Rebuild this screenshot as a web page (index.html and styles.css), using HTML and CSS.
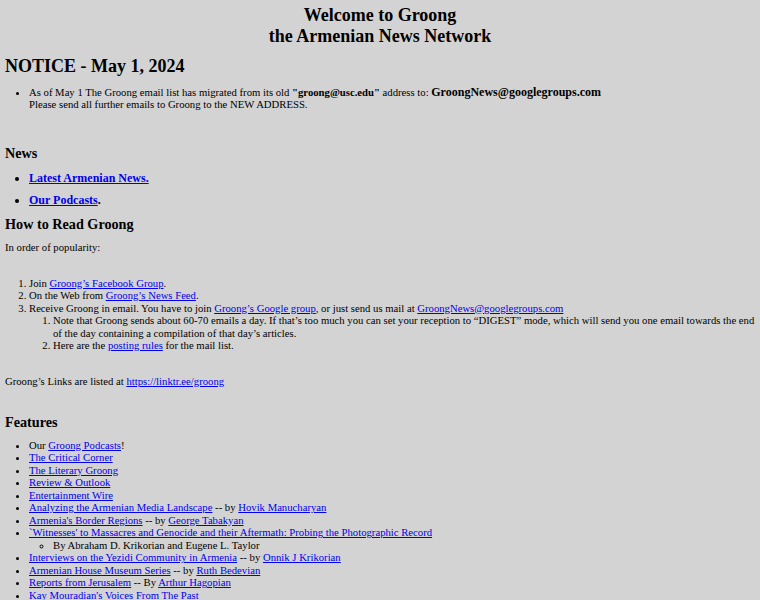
FILE: index.html
```html
<!DOCTYPE html>
<html>
<head>
<meta charset="utf-8">
<title>Groong</title>
<link rel="stylesheet" href="styles.css">
</head>
<body>
<h1 class="title">Welcome to Groong<br>the Armenian News Network</h1>
<h1 class="notice">NOTICE - May 1, 2024</h1>
<ul class="notice-list">
<li>As of May 1 The Groong email list has migrated from its old <b>"groong@usc.edu"</b> address to: <b class="big">GroongNews@googlegroups.com</b><br>Please send all further emails to Groong to the NEW ADDRESS.</li>
</ul>
<h2 class="sec news-h">News</h2>
<ul class="news-list">
<li><a href="#">Latest Armenian News.</a></li>
<li><a href="#">Our Podcasts</a>.</li>
</ul>
<h2 class="sec how-h">How to Read Groong</h2>
<p class="order">In order of popularity:</p>
<ol class="read-list">
<li>Join <a href="#">Groong’s Facebook Group</a>.</li>
<li>On the Web from <a href="#">Groong’s News Feed</a>.</li>
<li>Receive Groong in email. You have to join <a href="#">Groong’s Google group</a>, or just send us mail at <a href="#">GroongNews@googlegroups.com</a>
<ol>
<li>Note that Groong sends about 60-70 emails a day. If that’s too much you can set your reception to “DIGEST” mode, which will send you one email towards the end of the day containing a compilation of that day’s articles.</li>
<li>Here are the <a href="#">posting rules</a> for the mail list.</li>
</ol>
</li>
</ol>
<p class="links">Groong’s Links are listed at <a href="#">https://linktr.ee/groong</a></p>
<h2 class="sec feat-h">Features</h2>
<ul class="feat-list">
<li>Our <a href="#">Groong Podcasts</a>!</li>
<li><a href="#">The Critical Corner</a></li>
<li><a href="#">The Literary Groong</a></li>
<li><a href="#">Review &amp; Outlook</a></li>
<li><a href="#">Entertainment Wire</a></li>
<li><a href="#">Analyzing the Armenian Media Landscape</a> -- by <a href="#">Hovik Manucharyan</a></li>
<li><a href="#">Armenia's Border Regions</a> -- by <a href="#">George Tabakyan</a></li>
<li><a href="#">`Witnesses' to Massacres and Genocide and their Aftermath: Probing the Photographic Record</a>
<ul><li>By Abraham D. Krikorian and Eugene L. Taylor</li></ul>
</li>
<li><a href="#">Interviews on the Yezidi Community in Armenia</a> -- by <a href="#">Onnik J Krikorian</a></li>
<li><a href="#">Armenian House Museum Series</a> -- by <a href="#">Ruth Bedevian</a></li>
<li><a href="#">Reports from Jerusalem</a> -- By <a href="#">Arthur Hagopian</a></li>
<li><a href="#">Kay Mouradian's Voices From The Past</a></li>
</ul>
</body>
</html>
```
FILE: styles.css
```css
html { background: #d3d3d3; }
body {
  margin: 0 5px;
  padding-top: 5px;
  background: #d3d3d3;
  color: #000;
  font-family: "Liberation Serif", "Times New Roman", serif;
  font-size: 10.7px;
  line-height: 12.5px;
}
a { color: #0000ee; }
h1, h2, p, ul, ol { margin: 0; }
.title {
  font-size: 18px;
  line-height: 20.5px;
  text-align: center;
}
.notice {
  font-size: 18px;
  line-height: 21px;
  margin-top: 10px;
}
ul, ol { padding-left: 24px; }
.notice-list { margin-top: 8.5px; }
.big { font-size: 12px; }
.sec {
  font-size: 14.2px;
  line-height: 16.5px;
}
.news-h { margin-top: 34px; }
.news-list { margin-top: 9px; }
.news-list li {
  font-size: 12px;
  line-height: 16.5px;
  font-weight: bold;
  margin-bottom: 5.5px;
}
.news-list li:last-child { margin-bottom: 0; }
.how-h { margin-top: 7.5px; }
.order { margin-top: 8px; }
.read-list { margin-top: 23.5px; }
.links { margin-top: 23.3px; }
.feat-h { margin-top: 26.5px; }
.feat-list { margin-top: 8.5px; }
.feat-list ul { list-style: circle; }
```
